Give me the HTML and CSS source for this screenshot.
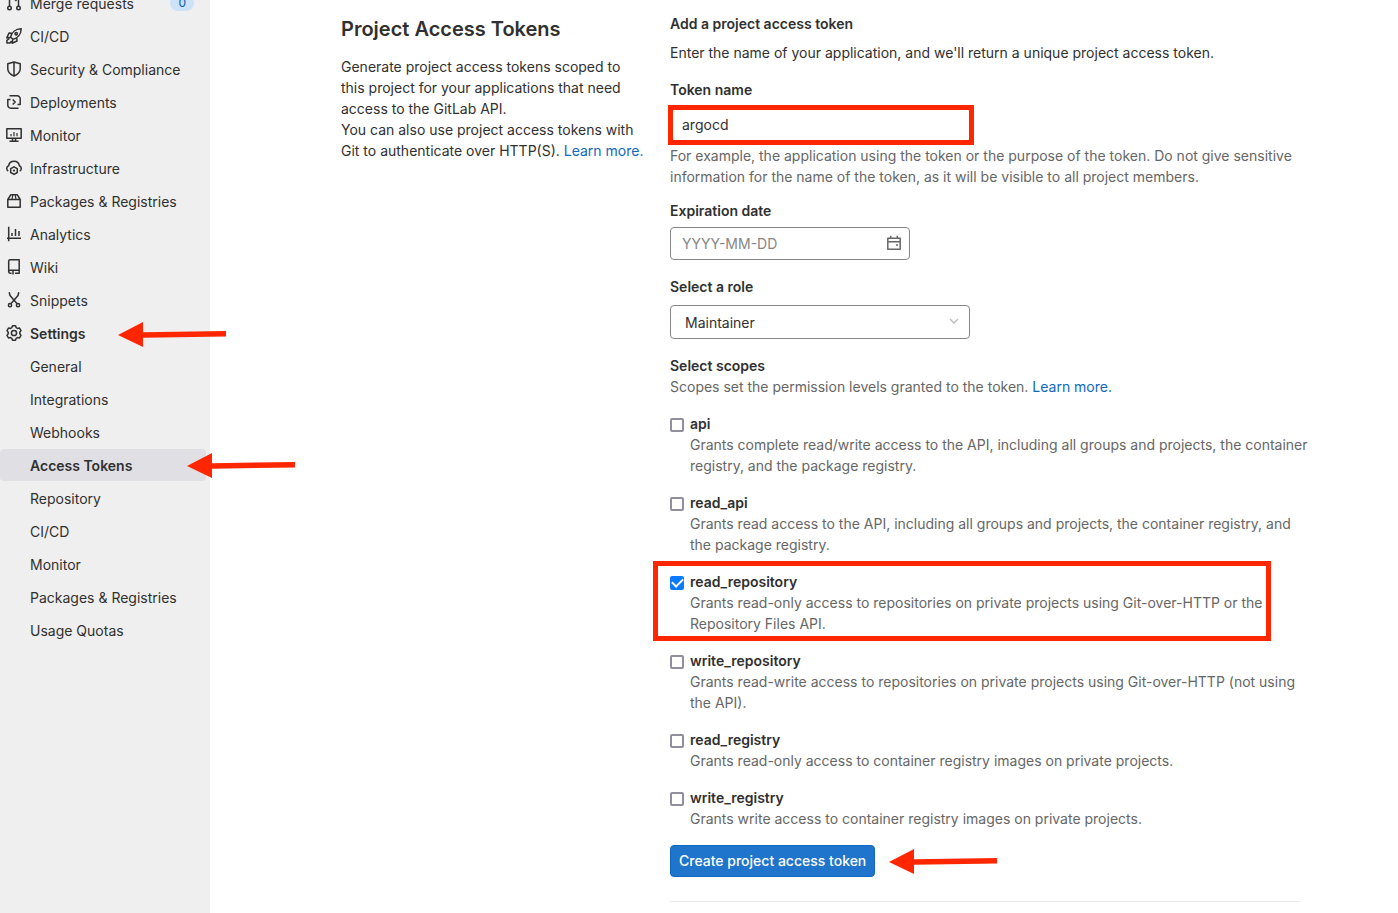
FILE: index.html
```
<!DOCTYPE html>
<html lang="en">
<head>
<meta charset="utf-8">
<meta name="viewport" content="width=device-width, initial-scale=1">
<title>Project Access Tokens</title>
<link rel="stylesheet" href="styles.css">
</head>
<body>
<div class="page">
  <aside class="sidebar">
    <nav aria-label="Project navigation">
      <ul class="nav-list">
        <li class="nav-item"><a class="nav-link" href="#">
          <svg class="icon" viewBox="0 0 16 16"><circle cx="3.500" cy="13" r="1.750"/><circle cx="12.500" cy="13" r="1.750"/><path d="M3.500 2v9.200M12.500 11.200V5.500a2 2 0 0 0-2-2H8.500M10.500 1 8 3.500 10.500 6"/></svg>
          <span class="nav-text">Merge requests</span><span class="badge">0</span></a></li>
        <li class="nav-item"><a class="nav-link" href="#">
          <svg class="icon" viewBox="0 0 16 16"><path d="M4.700 9.200C5.500 4.500 9.500 1 15.200.8 15 6.500 11.500 10.500 6.800 11.300ZM5.900 5.200 3 5 .8 9.900l3.900-.7 2.100 2.100M10.800 10.100 11 13l-4.900 2.200.7-3.900M3.500 10.500.9 12.300v2.800h2.800l2-2"/><circle cx="10.200" cy="5.800" r="1.200"/></svg>
          <span class="nav-text">CI/CD</span></a></li>
        <li class="nav-item"><a class="nav-link" href="#">
          <svg class="icon" viewBox="0 0 16 16"><path d="M8 1 14.200 2.800V8c0 3.500-2.700 5.500-6.200 7.200C4.500 13.500 1.800 11.500 1.800 8V2.800ZM8 1v14"/></svg>
          <span class="nav-text">Security &amp; Compliance</span></a></li>
        <li class="nav-item"><a class="nav-link" href="#">
          <svg class="icon" viewBox="0 0 16 16"><path d="M3.500 1.800h7.700a3 3 0 0 1 3 3v5.700H11.500M12.500 14.200H4.800a3 3 0 0 1-3-3V5.500H4.500M6.700 5.500 9.200 8l-2.500 2.500"/></svg>
          <span class="nav-text">Deployments</span></a></li>
        <li class="nav-item"><a class="nav-link" href="#">
          <svg class="icon" viewBox="0 0 16 16"><path d="M.8 1.800h14.400v9.400H.8ZM6.500 11.500v2.700M9.500 11.500v2.700M3.500 14.300h9"/><path class="thin" d="M5 7v2.200M8 5v4.200M11 6v3.200"/></svg>
          <span class="nav-text">Monitor</span></a></li>
        <li class="nav-item"><a class="nav-link" href="#">
          <svg class="icon" viewBox="0 0 16 16"><path d="M2.300 11.200A3 3 0 0 1 2.600 5.800 5.500 5.500 0 0 1 13.400 5.800 3 3 0 0 1 13.700 11.200"/><path d="M8 6.800l3.300 1.900v3.800L8 14.400l-3.300-1.900V8.700Z"/><circle class="dot" cx="8" cy="10.600" r="1.100"/></svg>
          <span class="nav-text">Infrastructure</span></a></li>
        <li class="nav-item"><a class="nav-link" href="#">
          <svg class="icon" viewBox="0 0 16 16"><path d="M1.800 6.500v7.700h12.400V6.500L11.300 1.800H4.700L1.800 6.500h12.400"/><path class="thin" d="M6.800 1.800 6 6.500M9.200 1.800l.8 4.700"/></svg>
          <span class="nav-text">Packages &amp; Registries</span></a></li>
        <li class="nav-item"><a class="nav-link" href="#">
          <svg class="icon" viewBox="0 0 16 16"><path d="M2.700.8v14.400M1 12.200h14M6 7v3M9.500 3v7M13 5V10"/></svg>
          <span class="nav-text">Analytics</span></a></li>
        <li class="nav-item"><a class="nav-link" href="#">
          <svg class="icon" viewBox="0 0 16 16"><path d="M4 .8h9.200v13.400H9M5.500 14.200H4A1.500 1.500 0 0 1 2.700 12.800V2A1.300 1.300 0 0 1 4 .8M2.700 12.300A1.500 1.500 0 0 1 4 11.200h9M7 12v3.500"/></svg>
          <span class="nav-text">Wiki</span></a></li>
        <li class="nav-item"><a class="nav-link" href="#">
          <svg class="icon" viewBox="0 0 16 16"><path d="M3.200.3 4 3.500l6.900 8M12.800.3 12 3.500l-6.900 8"/><circle cx="4" cy="13.200" r="1.600"/><circle cx="12" cy="13.200" r="1.600"/></svg>
          <span class="nav-text">Snippets</span></a></li>
        <li class="nav-item"><a class="nav-link nav-link-current" href="#">
          <svg class="icon" viewBox="0 0 16 16"><path d="M6.500.8h3l.7 1.900 1.300.7 2-.4 1.500 2.600L13.800 7.200v1.600l1.200 1.600-1.500 2.600-2-.4-1.300.7-.7 1.900h-3l-.7-1.900-1.300-.7-2 .4L1 10.400 2.200 8.800V7.200L1 5.600 2.500 3l2 .4 1.300-.7Z"/><circle cx="8" cy="8" r="2.600"/></svg>
          <span class="nav-text">Settings</span></a>
          <svg class="arrow arrow-settings" viewBox="0 0 108 25"><path d="M0 13 25 0v10.200L108 9v5.500l-83 1.200V25Z"/></svg></li>
        <li class="nav-item"><a class="nav-link nav-sub" href="#"><span class="nav-text">General</span></a></li>
        <li class="nav-item"><a class="nav-link nav-sub" href="#"><span class="nav-text">Integrations</span></a></li>
        <li class="nav-item"><a class="nav-link nav-sub" href="#"><span class="nav-text">Webhooks</span></a></li>
        <li class="nav-item"><a class="nav-link nav-sub nav-link-current nav-link-active" href="#" aria-current="page"><span class="nav-text">Access Tokens</span></a>
          <svg class="arrow arrow-tokens" viewBox="0 0 108 25"><path d="M0 13 25 0v10.200L108 9v5.500l-83 1.200V25Z"/></svg></li>
        <li class="nav-item"><a class="nav-link nav-sub" href="#"><span class="nav-text">Repository</span></a></li>
        <li class="nav-item"><a class="nav-link nav-sub" href="#"><span class="nav-text">CI/CD</span></a></li>
        <li class="nav-item"><a class="nav-link nav-sub" href="#"><span class="nav-text">Monitor</span></a></li>
        <li class="nav-item"><a class="nav-link nav-sub" href="#"><span class="nav-text">Packages &amp; Registries</span></a></li>
        <li class="nav-item"><a class="nav-link nav-sub" href="#"><span class="nav-text">Usage Quotas</span></a></li>
      </ul>
    </nav>
  </aside>
  <main class="main">
    <div class="content">
      <section class="intro">
        <h1 class="title">Project Access Tokens</h1>
        <p class="text">Generate project access tokens scoped to<br>this project for your applications that need<br>access to the GitLab API.</p>
        <p class="text">You can also use project access tokens with<br>Git to authenticate over HTTP(S). <a class="link" href="#">Learn more.</a></p>
      </section>
      <form class="form">
        <h2 class="label">Add a project access token</h2>
        <p class="text form-lead">Enter the name of your application, and we'll return a unique project access token.</p>
        <div class="field">
          <label class="label" for="token-name">Token name</label>
          <div class="name-box"><input class="control" id="token-name" type="text" value="argocd"></div>
          <p class="text muted">For example, the application using the token or the purpose of the token. Do not give sensitive<br>information for the name of the token, as it will be visible to all project members.</p>
        </div>
        <div class="field">
          <label class="label" for="expires">Expiration date</label>
          <div class="date-box">
            <input class="control" id="expires" type="text" placeholder="YYYY-MM-DD">
            <svg class="icon calendar" viewBox="0 0 16 16"><path d="M1.800 3.200h12.400v11H1.800ZM1.800 6.700h12.400M4.700.8v2.400M11.300.8v2.400M10 10h2"/></svg>
          </div>
        </div>
        <div class="field">
          <label class="label" for="role">Select a role</label>
          <div class="role-box">
            <select class="control role" id="role"><option>Maintainer</option></select>
            <svg class="chevron" viewBox="0 0 10 6"><path d="m1 1 4 4 4-4"/></svg>
          </div>
        </div>
        <fieldset class="scopes">
          <legend class="label">Select scopes</legend>
          <p class="text muted">Scopes set the permission levels granted to the token. <a class="link" href="#">Learn more.</a></p>
          <div class="scope-list">
            <div class="scope"><input class="check" type="checkbox" id="s1"><div><label class="label" for="s1">api</label><p class="text muted">Grants complete read/write access to the API, including all groups and projects, the container<br>registry, and the package registry.</p></div></div>
            <div class="scope"><input class="check" type="checkbox" id="s2"><div><label class="label" for="s2">read_api</label><p class="text muted">Grants read access to the API, including all groups and projects, the container registry, and<br>the package registry.</p></div></div>
            <div class="scope scope-marked"><input class="check" type="checkbox" id="s3" checked><div><label class="label" for="s3">read_repository</label><p class="text muted">Grants read-only access to repositories on private projects using Git-over-HTTP or the<br>Repository Files API.</p></div></div>
            <div class="scope"><input class="check" type="checkbox" id="s4"><div><label class="label" for="s4">write_repository</label><p class="text muted">Grants read-write access to repositories on private projects using Git-over-HTTP (not using<br>the API).</p></div></div>
            <div class="scope"><input class="check" type="checkbox" id="s5"><div><label class="label" for="s5">read_registry</label><p class="text muted">Grants read-only access to container registry images on private projects.</p></div></div>
            <div class="scope"><input class="check" type="checkbox" id="s6"><div><label class="label" for="s6">write_registry</label><p class="text muted">Grants write access to container registry images on private projects.</p></div></div>
          </div>
        </fieldset>
        <div class="actions">
          <button class="button" type="button">Create project access token</button>
          <svg class="arrow-inline" viewBox="0 0 108 25"><path d="M0 13 25 0v10.200L108 9v5.500l-83 1.200V25Z"/></svg>
        </div>
        <hr class="rule">
      </form>
    </div>
  </main>
</div>
</body>
</html>
```
FILE: styles.css
```
* { box-sizing: border-box; }
body {
  margin: 0;
  background: #fff;
  color: #303030;
  font: 14px/21px Inter, "Liberation Sans", sans-serif;
}
h1, h2, p, ul { margin: 0; padding: 0; }
.page { display: flex; min-height: 100vh; overflow: hidden; }

.sidebar { flex: 0 0 210px; background: #efefef; }
.nav-list {
  display: flex;
  flex-direction: column;
  gap: 1px;
  margin-top: -13px;
  list-style: none;
}
.nav-item { position: relative; }
.nav-link {
  display: flex;
  align-items: center;
  gap: 8px;
  height: 32px;
  margin-right: 4px;
  padding: 0 12px 0 6px;
  border-radius: 4px;
  color: #303030;
  text-decoration: none;
}
.nav-sub { padding-left: 30px; }
.nav-text { padding-top: 2px; line-height: 16px; }
.nav-link-current { font-weight: 600; }
.nav-link-active { background: #dfdfe4; }
.badge {
  margin-left: auto;
  padding: 0 8px;
  border-radius: 8px;
  background: #cbe2f9;
  color: #0b5cad;
  font-size: 12px;
  line-height: 16px;
}
.icon {
  flex: none;
  width: 16px;
  height: 16px;
  fill: none;
  stroke: #303030;
  stroke-width: 1.5;
  stroke-linejoin: round;
}
.thin { stroke-width: 1.2; }
.dot { fill: #303030; stroke: none; }
.arrow, .arrow-inline { width: 108px; height: 25px; fill: #ff2600; }
.arrow { position: absolute; z-index: 1; }
.arrow-settings { top: 5px; left: 118px; }
.arrow-tokens { top: 4px; left: 187px; }

.main { flex: 1; min-width: 0; padding: 13px 16px 0 49px; }
.content {
  display: grid;
  grid-template-columns: 10fr 21fr;
  gap: 29px;
  max-width: 959px;
  margin: 0 auto;
}
.content > * { min-width: 0; }
.title {
  margin: 4px 0 14px;
  font-size: 20px;
  font-weight: 600;
  line-height: 25px;
}
.text { white-space: nowrap; }
.muted { color: #666; }
.link { color: #1068bf; text-decoration: none; }
.label {
  display: block;
  padding: 0;
  font-size: 14px;
  font-weight: 600;
  line-height: 21px;
}
.form-lead { margin: 8px 0 16px; }
.field { margin-bottom: 13px; }
.control {
  display: block;
  width: 100%;
  height: 32px;
  padding: 0 11px 1px;
  border: 1px solid #868686;
  border-radius: 4px;
  background: #fff;
  color: #303030;
  font: inherit;
}
.control::placeholder { color: #868686; opacity: 1; }
.name-box { position: relative; max-width: 302px; margin: 9px 0 4px; }
.name-box::after {
  content: "";
  position: absolute;
  inset: -4px -2px;
  border: 5px solid #ff2600;
  pointer-events: none;
}
.date-box { position: relative; max-width: 240px; margin: 6px 0 16px; }
.date-box .control { height: 33px; }
.calendar { position: absolute; top: 8px; right: 8px; stroke: #666; }
.role-box { position: relative; max-width: 300px; margin: 8px 0 16px; }
.role { height: 34px; padding: 0 14px; appearance: none; }
.chevron {
  position: absolute;
  top: 13px;
  right: 11px;
  width: 10px;
  height: 6px;
  fill: none;
  stroke: #bfbfbf;
  stroke-width: 1.5;
}
.scopes { min-width: 0; margin: 0; padding: 0; border: 0; }
.scope-list {
  display: grid;
  grid-template-columns: minmax(0, 1fr);
  gap: 16px;
  margin-top: 16px;
}
.scope { display: flex; gap: 6px; position: relative; }
.scope-marked::after {
  content: "";
  position: absolute;
  inset: -10px 29px -7px -17px;
  border: 5px solid #ff2600;
  pointer-events: none;
}
.check {
  flex: none;
  appearance: none;
  width: 14px;
  height: 14px;
  margin: 5px 0 0;
  border: 2px solid #8f8f9d;
  border-radius: 2px;
  background: #fff;
}
.check:checked {
  display: grid;
  place-items: center;
  border-color: #0a7aff;
  background: #0a7aff;
}
.check:checked::before {
  content: "";
  width: 9px;
  height: 5px;
  margin-bottom: 3px;
  border: solid #fff;
  border-width: 0 0 2px 2px;
  transform: rotate(-45deg);
}
.actions { display: flex; align-items: center; gap: 14px; margin-top: 16px; }
.button {
  height: 32px;
  padding: 0 8px 2px;
  border: 1px solid #1068bf;
  border-radius: 4px;
  background: #1f75cb;
  color: #fff;
  font: inherit;
  font-weight: 500;
  white-space: nowrap;
}
.rule { margin: 24px 0 0; border: 0; border-top: 1px solid #ececec; }

@media (max-width: 1300px) {
  .text { white-space: normal; }
  .text br { display: none; }
}
```
